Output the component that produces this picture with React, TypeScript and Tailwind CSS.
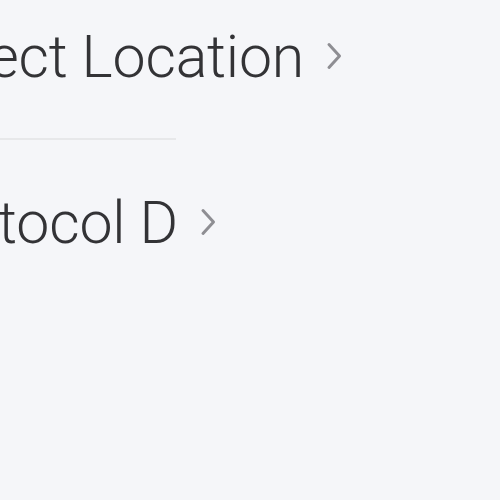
function Chevron() {
  return (
    <svg width="18" height="28" viewBox="0 0 18 28" className="ml-[21px] shrink-0" fill="none">
      <path d="M4 2.5l10.5 11.5-10.5 11.5" stroke="#8e8e93" strokeWidth="3" strokeLinecap="round" strokeLinejoin="round" />
    </svg>
  );
}

export default function App() {
  return (
    <div className="h-[500px] w-[500px] overflow-hidden bg-[#f5f6f9] font-['Roboto',sans-serif]">
      <div className="ml-[-90px]">
        <div className="flex h-[112px] items-center">
          <span className="text-[59px] font-light leading-none tracking-[-0.2px] text-[#333336]">Select Location</span>
          <Chevron />
        </div>
        <div className="mt-[26px] h-[2px] w-[266px] bg-[#e7e8ea]" />
        <div className="mt-[26px] flex h-[112px] items-center">
          <span className="text-[59px] font-light leading-none tracking-[-0.2px] text-[#333336]">Protocol D</span>
          <Chevron />
        </div>
      </div>
    </div>
  );
}
